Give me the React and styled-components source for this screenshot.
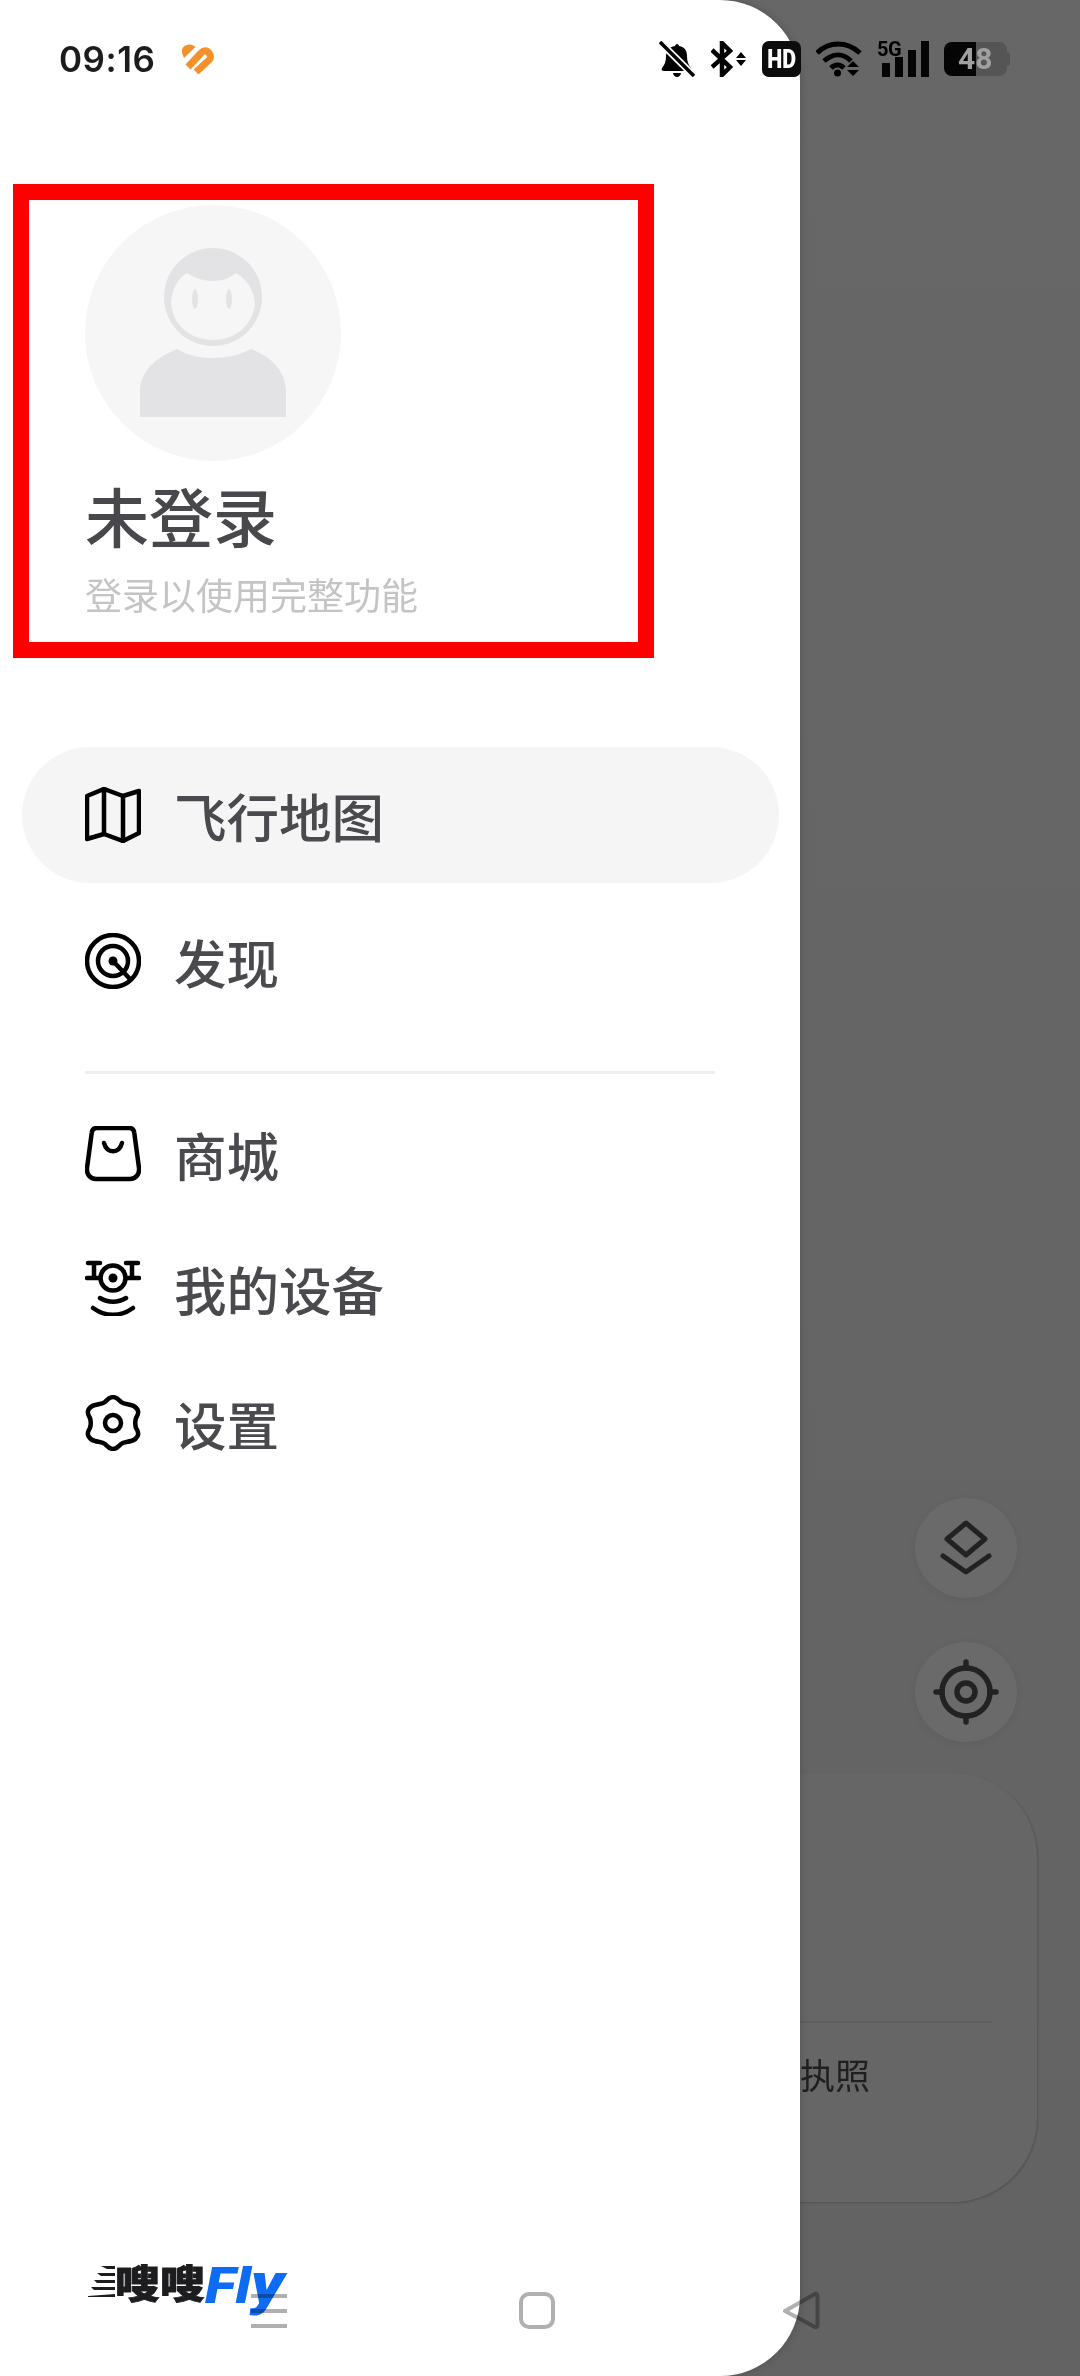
import React from 'react';
import styled, { createGlobalStyle } from 'styled-components';

const GlobalStyle = createGlobalStyle`
    html, body {
        margin: 0;
        padding: 0;
        background: #656565;
    }
    body {
        font-family: "Noto Sans CJK SC", "Noto Sans", sans-serif;
    }
`;

const MapIcon = () => (
    <MenuSvg viewBox="0 0 56 56">
        <path d="M2 9 19 2l19 7 16-5v42l-16 8-19-7-17 5Z" />
        <path d="M19 2v45M38 9v45" />
    </MenuSvg>
);

const DiscoverIcon = () => (
    <MenuSvg viewBox="0 0 56 56">
        <circle cx="28" cy="28" r="26" />
        <circle cx="28" cy="28" r="15" />
        <circle cx="28" cy="28" r="4.500" fill="#000" stroke="none" />
        <path d="M28 28 45 46" />
    </MenuSvg>
);

const ShopIcon = () => (
    <MenuSvg viewBox="0 0 56 56">
        <path d="M12 2h32c3 0 5 2 5.300 5L54 42c.6 6-3 11-9 11H11c-6 0-9.600-5-9-11L6.700 7C7 4 9 2 12 2Z" />
        <path d="M19 17c3 11 15 11 18 0" />
    </MenuSvg>
);

const DroneIcon = () => (
    <MenuSvg viewBox="0 0 56 56">
        <circle cx="28" cy="18" r="12.500" />
        <circle cx="28" cy="18" r="4.500" fill="#000" stroke="none" />
        <path d="M2 18h13M41 18h13M3 3h12M41 3h12M9 3v15M47 3v15" />
        <path d="M15 38c8 5 18 5 26 0M8 48c12 9 28 9 40 0" />
    </MenuSvg>
);

const GearIcon = () => (
    <MenuSvg viewBox="0 0 56 56">
        <path d="M28 2c3.500 0 5.500 2.500 8 5 2.500 2 6.500 2 10 3 4 1 6 3 7 6 .8 3-1 5-2 7-1 3.300-1 6.700 0 10 1 2 2.800 4 2 7-1 3-3 5-7 6-3.500 1-7.500 1-10 3-2.500 2.500-4.500 5-8 5s-5.500-2.500-8-5c-2.500-2-6.500-2-10-3-4-1-6-3-7-6-.8-3 1-5 2-7 1-3.300 1-6.700 0-10-1-2-2.800-4-2-7 1-3 3-5 7-6 3.500-1 7.500-1 10-3 2.500-2.500 4.500-5 8-5Z" />
        <circle cx="28" cy="28" r="8" />
    </MenuSvg>
);

const Avatar = () => (
    <AvatarSvg viewBox="0 0 256 256">
        <circle cx="128" cy="128" r="128" fill="#f6f6f7" />
        <ellipse cx="128" cy="92" rx="49" ry="49" fill="#e3e3e5" />
        <path d="M102 68c8 5 16 8 26 8s17-3 23-8c10 6 18 16 19 30-1 20-18 37-42 37s-41-17-42-37c1-14 6-24 16-30Z" fill="#f6f6f7" />
        <ellipse cx="110" cy="94" rx="3" ry="10" fill="#e3e3e5" />
        <ellipse cx="144" cy="94" rx="3" ry="10" fill="#e3e3e5" />
        <path d="M92 144c10 6 22 9 36 9s27-3 38-9c20 8 33 20 35 40v28H55v-28c2-20 17-32 37-40Z" fill="#e3e3e5" />
    </AvatarSvg>
);

const items = [
    { label: '飞行地图', icon: <MapIcon />, active: true },
    { label: '发现', icon: <DiscoverIcon />, gapTop: 11 },
];

const moreItems = [
    { label: '商城', icon: <ShopIcon /> },
    { label: '我的设备', icon: <DroneIcon /> },
    { label: '设置', icon: <GearIcon /> },
];

const MenuRow = ({ item }) => (
    <Row $active={item.active} $gapTop={item.gapTop}>
        {item.icon}
        <RowLabel>{item.label}</RowLabel>
    </Row>
);

export default function App() {
    return (
        <Screen>
            <GlobalStyle />
            <BackPage>
                <RoundButton>
                    <svg width="56" height="56" viewBox="0 0 56 56" fill="none" stroke="#222" strokeWidth="5" strokeLinecap="round" strokeLinejoin="round">
                        <path d="M28 3 47 19 28 35 9 19Z" />
                        <path d="M5 36l23 16 23-16" />
                    </svg>
                </RoundButton>
                <RoundButton $gapTop={44}>
                    <svg width="68" height="68" viewBox="0 0 68 68" fill="none" stroke="#222" strokeWidth="5.500" strokeLinecap="round">
                        <circle cx="34" cy="34" r="24" />
                        <circle cx="34" cy="34" r="9" />
                        <path d="M34 4v6M34 58v6M4 34h6M58 34h6" />
                    </svg>
                </RoundButton>
                <Card>
                    <CardDivider />
                    <CardText>执照</CardText>
                </Card>
            </BackPage>

            <Drawer>
                <ProfileBox>
                    <Avatar />
                    <ProfileName>未登录</ProfileName>
                    <ProfileHint>登录以使用完整功能</ProfileHint>
                </ProfileBox>
                <Menu>
                    {items.map((item) => <MenuRow key={item.label} item={item} />)}
                    <Divider />
                    {moreItems.map((item) => <MenuRow key={item.label} item={item} />)}
                </Menu>
                <Logo>
                    <LogoLines viewBox="0 0 27 36" fill="#1d1d1f">
                        <path d="M13 1h14v3H19ZM9 8h18v3H13ZM6 15h21v3H9ZM3 22h24v3H6ZM0 31l27-2v3H0Z" />
                    </LogoLines>
                    <LogoCn>嗖嗖</LogoCn>
                    <LogoEn>Fl<LogoTail>y</LogoTail></LogoEn>
                </Logo>
            </Drawer>

            <StatusBar>
                <Time>09:16</Time>
                <svg width="35" height="30" viewBox="0 0 35 30" fill="#f5912a">
                    <path d="M3 14 1 9c-1-6 3-8 7-8.500 3 0 5 1 6.500 2.500Z" />
                    <path d="M7 23 20 9c3-3 6-3 8 0s2 5 0 7L15 28" fill="none" stroke="#f5912a" strokeWidth="7" />
                </svg>
                <StatusIcons>
                    <svg width="37" height="36" viewBox="0 0 37 36">
                        <path d="M18 3c1 0 2 1 2 2 6 1 8 5 8 10 0 5 1 8 4 12 1 2 0 3-2 3H5c-2 0-3-1-2-3 3-4 4-7 4-12 0-5 3-9 9-10 0-1 1-2 2-2ZM14 32h8c0 2-2 4-4 4s-4-2-4-4Z" fill="#000" />
                        <path d="M1 1 35 35" stroke="#fff" strokeWidth="7" />
                        <path d="M1 1 35 35" stroke="#000" strokeWidth="3.500" />
                    </svg>
                    <svg width="36" height="36" viewBox="0 0 36 36" fill="none" stroke="#000" strokeWidth="4.500">
                        <path d="M1 9 19 26 11 34V2l8 8L1 26" />
                        <path d="M25 17l5-6 5 6ZM25 19l5 6 5-6Z" fill="#000" stroke="none" />
                    </svg>
                    <HdBadge><HdText>HD</HdText></HdBadge>
                    <svg width="46" height="36" viewBox="0 0 46 36" fill="none" stroke="#000" strokeWidth="5">
                        <path d="M1 12C13 0 31 0 44 12M8 20c9-8 19-8 27 0M15 27c4-4 9-4 13 0" />
                        <circle cx="21.500" cy="32" r="3.500" fill="#000" stroke="none" />
                        <path d="M31 26l6-6 6 6ZM31 29l6 6 6-6Z" fill="#000" stroke="none" />
                    </svg>
                    <Signal>
                        <SignalText>5G</SignalText>
                        <SignalBar $h={14} />
                        <SignalBar $h={20} />
                        <SignalBar $h={27} />
                        <SignalBar $h={36} />
                    </Signal>
                    <Battery>
                        <BatteryBody>
                            <BatteryFill />
                            <BatteryText>48</BatteryText>
                        </BatteryBody>
                    </Battery>
                </StatusIcons>
            </StatusBar>

            <NavBar>
                <NavSvg width="36" height="39" viewBox="0 0 36 39">
                    <path d="M0 5h36M0 20h36M0 35h36" />
                </NavSvg>
                <NavSvg $gap={232} width="36" height="39" viewBox="0 0 36 39">
                    <rect x="2" y="3" width="32" height="33" rx="8" />
                </NavSvg>
                <NavSvg $gap={227} width="38" height="39" viewBox="0 0 38 39">
                    <path d="M3 20 33 3c1.500-.500 2.500 0 2.500 2v29c0 2-1 2.500-2.500 2Z" strokeLinejoin="round" />
                </NavSvg>
            </NavBar>
        </Screen>
    );
}

const Screen = styled.div`
    position: relative;
    width: 1080px;
    height: 2376px;
    overflow: hidden;
`;

const BackPage = styled.div`
    box-sizing: border-box;
    width: 1080px;
    height: 2376px;
    padding: 0 0 174px 0;
    background: linear-gradient(#676767, #636363);
    display: flex;
    flex-direction: column;
    justify-content: flex-end;
    align-items: flex-end;
`;

const RoundButton = styled.div`
    width: 102px;
    height: 100px;
    margin-right: 63px;
    margin-top: ${(p) => p.$gapTop || 0}px;
    border-radius: 50%;
    background: #6a6a6a;
    box-shadow: 0 2px 10px rgba(0, 0, 0, 0.06);
    display: flex;
    align-items: center;
    justify-content: center;
`;

const Card = styled.div`
    box-sizing: border-box;
    width: 1000px;
    height: 429px;
    margin: 31px 43px 0 0;
    padding: 248px 45px 0 0;
    border-radius: 84px;
    background: #666666;
    box-shadow: 1px 1px 2px rgba(0, 0, 0, 0.18);
`;

const CardDivider = styled.div`
    height: 2px;
    background: #5f5f5f;
`;

const CardText = styled.div`
    margin-top: 28px;
    padding-right: 122px;
    text-align: right;
    font-size: 35px;
    line-height: 46px;
    color: #1f1f1f;
`;

const Drawer = styled.div`
    position: absolute;
    top: 0;
    left: 0;
    box-sizing: border-box;
    width: 800px;
    height: 2376px;
    padding: 184px 0 56px;
    background: #fff;
    border-radius: 0 80px 80px 0;
    box-shadow: 0 0 10px rgba(0, 0, 0, 0.18);
    display: flex;
    flex-direction: column;
`;

const ProfileBox = styled.div`
    box-sizing: border-box;
    width: 641px;
    height: 474px;
    margin-left: 13px;
    padding: 5px 0 0 56px;
    border: 16px solid #ff0000;
`;

const AvatarSvg = styled.svg`
    display: block;
    width: 256px;
    height: 256px;
`;

const ProfileName = styled.div`
    margin-top: 13px;
    font-size: 64px;
    line-height: 80px;
    font-weight: 500;
    color: #48484c;
`;

const ProfileHint = styled.div`
    margin-top: 15px;
    font-size: 37px;
    line-height: 50px;
    color: #c4c4c6;
`;

const Menu = styled.nav`
    margin: 89px 21px 0 22px;
`;

const Row = styled.div`
    height: ${(p) => (p.$active ? 136 : 134.5)}px;
    margin-top: ${(p) => p.$gapTop || 0}px;
    padding-left: 63px;
    border-radius: 68px;
    background: ${(p) => (p.$active ? '#f5f5f6' : 'transparent')};
    display: flex;
    align-items: center;
    gap: 33px;
`;

const RowLabel = styled.span`
    font-size: 52.500px;
    line-height: 60px;
    font-weight: 500;
    color: #4a4a4e;
`;

const MenuSvg = styled.svg`
    width: 56px;
    height: 56px;
    flex: none;
    fill: none;
    stroke: #000;
    stroke-width: 4.500px;
    stroke-linecap: round;
    stroke-linejoin: round;
`;

const Divider = styled.div`
    height: 3px;
    margin: 42px 64px 13px 63px;
    background: #eeeeef;
`;

const Logo = styled.div`
    margin: auto 0 0 88px;
    height: 60px;
    display: flex;
    align-items: flex-start;
`;

const LogoLines = styled.svg`
    width: 27px;
    height: 36px;
    margin-top: 5px;
`;

const LogoCn = styled.span`
    display: inline-block;
    margin-top: -8px;
    font-size: 45px;
    line-height: 60px;
    font-weight: 900;
    color: #1d1d1f;
    -webkit-text-stroke: 1px #1d1d1f;
    transform: scaleY(0.85);
`;

const LogoEn = styled.span`
    display: inline-block;
    margin-top: -2px;
    font-family: Roboto, sans-serif;
    font-size: 50px;
    line-height: 50px;
    font-style: italic;
    font-weight: 900;
    color: #0d6cf2;
    transform: scaleX(1.15);
    transform-origin: left center;
`;

const LogoTail = styled.span`
    font-size: 58px;
    line-height: 50px;
    mix-blend-mode: multiply;
`;

const StatusBar = styled.div`
    position: absolute;
    top: 41px;
    left: 59px;
    right: 73px;
    height: 36px;
    display: flex;
    align-items: center;
    gap: 26px;
`;

const Time = styled.span`
    font-family: Inter, sans-serif;
    font-size: 35px;
    line-height: 36px;
    font-weight: 600;
    letter-spacing: 0.500px;
    color: #1c1c1c;
`;

const StatusIcons = styled.div`
    margin-left: auto;
    display: flex;
    align-items: center;
    gap: 15px;
`;

const HdBadge = styled.div`
    width: 39px;
    height: 36px;
    border-radius: 7px;
    background: #0c0c0c;
    color: #fff;
    font-family: Roboto, sans-serif;
    font-size: 26px;
    line-height: 36px;
    font-weight: 900;
    text-align: center;
`;

const HdText = styled.span`
    display: inline-block;
    transform: scaleX(0.82);
`;

const Signal = styled.div`
    position: relative;
    width: 52px;
    height: 36px;
    display: flex;
    align-items: flex-end;
    justify-content: flex-end;
    gap: 5px;
`;

const SignalText = styled.span`
    position: absolute;
    top: -2px;
    left: 0;
    font-family: Roboto, sans-serif;
    font-size: 20px;
    line-height: 20px;
    font-weight: 700;
    letter-spacing: -0.500px;
    color: #000;
`;

const SignalBar = styled.div`
    width: 8px;
    height: ${(p) => p.$h}px;
    background: #050505;
`;

const Battery = styled.div`
    position: relative;
    width: 63px;
    height: 34px;
    &::after {
        content: '';
        position: absolute;
        top: 10px;
        right: -3px;
        width: 3px;
        height: 14px;
        border-radius: 0 3px 3px 0;
        background: #555555;
    }
`;

const BatteryBody = styled.div`
    position: relative;
    height: 34px;
    border-radius: 8px;
    overflow: hidden;
    background: #555555;
`;

const BatteryFill = styled.div`
    width: 32px;
    height: 34px;
    background: #050505;
`;

const BatteryText = styled.span`
    position: absolute;
    top: 0;
    left: 14px;
    font-family: Roboto, sans-serif;
    font-size: 30px;
    line-height: 34px;
    font-weight: 700;
    color: #a0a0a0;
`;

const NavBar = styled.div`
    position: absolute;
    left: 251px;
    top: 2291px;
    display: flex;
    align-items: center;
`;

const NavSvg = styled.svg`
    margin-left: ${(p) => p.$gap || 0}px;
    fill: none;
    stroke: #b0b0b0;
    stroke-width: 4px;
    mix-blend-mode: multiply;
`;
